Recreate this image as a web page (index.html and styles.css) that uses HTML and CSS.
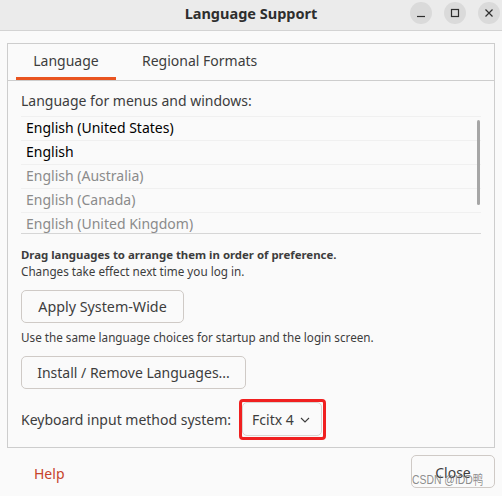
FILE: index.html
```html
<!DOCTYPE html>
<html lang="en">
<head>
<meta charset="utf-8">
<title>Language Support</title>
<link rel="stylesheet" href="styles.css">
</head>
<body>
<div class="window">
  <header class="titlebar">
    <div class="title">Language Support</div>
    <div class="wm-buttons">
      <span class="wm-btn"><svg width="10" height="10" viewBox="0 0 10 10"><path d="M1 8.5h8" stroke="#2e2e2e" stroke-width="1.2"/></svg></span>
      <span class="wm-btn"><svg width="10" height="10" viewBox="0 0 10 10"><rect x="1.5" y="1.5" width="7" height="7" fill="none" stroke="#2e2e2e" stroke-width="1.2"/></svg></span>
      <span class="wm-btn"><svg width="10" height="10" viewBox="0 0 10 10"><path d="M1.5 1.5l7 7M8.5 1.5l-7 7" stroke="#2e2e2e" stroke-width="1.2"/></svg></span>
    </div>
  </header>
  <main class="main">
    <section class="notebook">
      <nav class="tabs">
        <div class="tab active">Language</div>
        <div class="tab">Regional Formats</div>
      </nav>
      <div class="page">
        <div class="label">Language for menus and windows:</div>
        <div class="list">
          <div class="row strong">English (United States)</div>
          <div class="row strong">English</div>
          <div class="row dim">English (Australia)</div>
          <div class="row dim">English (Canada)</div>
          <div class="row dim">English (United Kingdom)</div>
          <div class="scrollbar"></div>
        </div>
        <div class="hint">
          <div class="hint-bold">Drag languages to arrange them in order of preference.</div>
          <div class="hint-text">Changes take effect next time you log in.</div>
        </div>
        <button class="btn btn-apply">Apply System-Wide</button>
        <div class="hint-text note">Use the same language choices for startup and the login screen.</div>
        <button class="btn btn-install">Install / Remove Languages...</button>
        <div class="im-row">
          <span class="im-label">Keyboard input method system:</span>
          <span class="highlight">
            <button class="combo">Fcitx 4 <svg class="chev" width="10" height="6" viewBox="0 0 10 6"><path d="M1 1l4 4 4-4" fill="none" stroke="#3d3d3d" stroke-width="1.1"/></svg></button>
          </span>
        </div>
      </div>
    </section>
    <footer class="footer">
      <span class="help">Help</span>
      <button class="btn btn-close">Close</button>
      <span class="watermark">CSDN @IDD鸭</span>
    </footer>
  </main>
</div>
</body>
</html>
```
FILE: styles.css
```css
* { box-sizing: border-box; }
html, body { margin: 0; padding: 0; }
body {
  background: #fafafa;
  font-family: "Noto Sans", "Open Sans", sans-serif;
  color: #3d3d3d;
  width: 502px;
  height: 496px;
  overflow: hidden;
}
.window { width: 502px; height: 496px; display: flex; flex-direction: column; }
.titlebar {
  height: 31px;
  background: #ebebeb;
  border-bottom: 1px solid #d3d3d3;
  display: flex;
  align-items: center;
  justify-content: center;
  position: relative;
}
.title { font-weight: 700; font-size: 14.5px; color: #2e2e2e; margin-top: -4px; }
.wm-buttons {
  position: absolute;
  right: 2px;
  top: 2px;
  display: flex;
  gap: 12px;
}
.wm-btn {
  width: 22px; height: 22px; border-radius: 50%;
  background: #dadada;
  display: flex; align-items: center; justify-content: center;
}
.main { padding: 12px 7px 0 7px; flex: 1; display: flex; flex-direction: column; }
.notebook { border: 1px solid #cdcdcd; background: #fafafa; }
.tabs {
  height: 37px;
  border-bottom: 1px solid #cdcdcd;
  display: flex;
  padding-left: 8px;
}
.tab {
  font-size: 14px;
  color: #3d3d3d;
  display: flex; align-items: center;
  padding-bottom: 3px;
}
.tab.active {
  width: 100px; justify-content: center;
  border-bottom: 3px solid #e95420;
  padding-bottom: 0;
}
.tab:not(.active) { padding-left: 26px; }
.page { padding: 11px 13px 7px 13px; }
.label { font-size: 14px; line-height: 18px; }
.list {
  margin-top: 6px;
  height: 118px;
  overflow: hidden;
  border-top: 1px solid #f0f0f0;
  border-bottom: 1px solid #d6d6d6;
  background: #fafafa;
  position: relative;
}
.row {
  height: 24px;
  line-height: 22px;
  padding-left: 5px;
  font-size: 14px;
  border-bottom: 1px solid #f0f0f0;
}
.row.strong { color: #000; }
.row.dim { color: #8b8b8b; }
.scrollbar {
  position: absolute;
  right: 1px; top: 3px;
  width: 3px; height: 85px;
  background: #a6a6a6;
  border-radius: 2px;
}
.hint { margin-top: 13px; }
.hint-bold { font-size: 11.4px; font-weight: 700; line-height: 16px; }
.hint-text { font-size: 11.7px; line-height: 16px; }
.btn {
  font-family: inherit;
  font-size: 14px;
  color: #3d3d3d;
  background: #fafafa;
  border: 1px solid #cfcac6;
  border-radius: 5px;
  height: 33px;
  padding: 0;
  display: block;
}
.btn-apply { width: 163px; margin-top: 11px; font-size: 14.3px; }
.note { margin-top: 6px; }
.btn-install { width: 225px; margin-top: 11px; }
.im-row { display: flex; align-items: center; margin-top: 10px; }
.im-label { font-size: 14px; }
.highlight {
  margin-left: 8px;
  border: 3px solid #f02020;
  border-radius: 4px;
  padding: 0 1px 1px 0;
  display: inline-flex;
}
.combo {
  font-family: inherit;
  font-size: 14px;
  color: #3d3d3d;
  background: #fafafa;
  border: 1px solid #d9d5d2;
  border-radius: 5px;
  height: 34px;
  width: 80px;
  padding: 0 0 0 9px;
  display: flex; align-items: center; gap: 6px;
}
.chev { margin-top: 1px; }
.footer {
  display: flex;
  align-items: center;
  justify-content: space-between;
  padding: 7px 0 0 27px;
  position: relative;
}
.help { color: #c7432a; font-size: 14px; padding-top: 3px; }
.btn-close { width: 84px; padding-top: 1px; }
.watermark {
  position: absolute;
  left: 405px;
  top: 24px;
  font-family: "Liberation Sans", "Noto Sans CJK SC", sans-serif;
  font-size: 13px;
  line-height: 16px;
  white-space: nowrap;
  color: rgba(120,120,120,0.85);
  transform: scaleX(0.8);
  transform-origin: left center;
  pointer-events: none;
}
```
